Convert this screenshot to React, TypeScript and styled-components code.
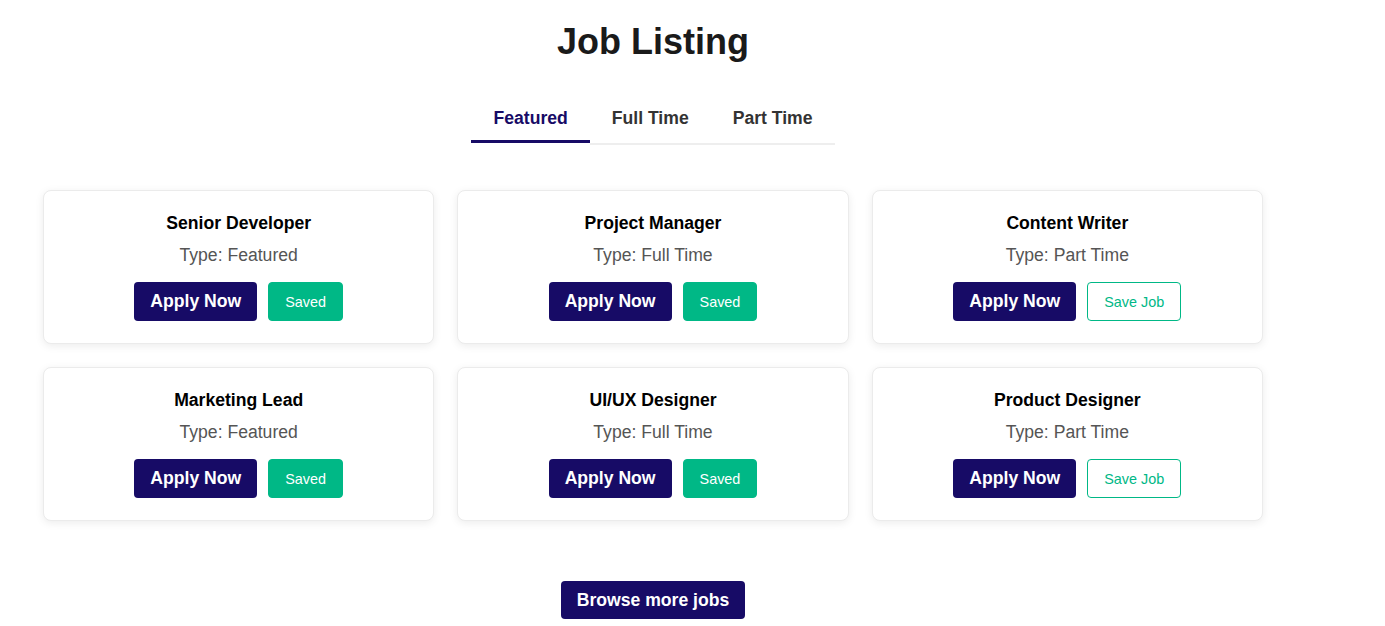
import React, { useState } from "react";
import styled, { createGlobalStyle } from "styled-components";

const GlobalStyle = createGlobalStyle`
  html, body { margin: 0; padding: 0; background: #ffffff; }
  body { font-family: "Liberation Sans", Arial, sans-serif; }
  * { box-sizing: border-box; }
`;

const INDIGO = "#170b66";
const GREEN = "#00b886";

const Page = styled.div`
  width: 1306px;
  padding: 20px 43px 0;
  display: flex;
  flex-direction: column;
  align-items: center;
`;

const Title = styled.h1`
  margin: 0;
  font-size: 36px;
  line-height: 44px;
  font-weight: 700;
  color: #1a1a1a;
`;

const TabList = styled.div`
  display: flex;
  align-items: flex-start;
  margin-top: 32px;
`;

const Tab = styled.button<{ $active?: boolean }>`
  font-family: inherit;
  background: none;
  border: none;
  cursor: pointer;
  font-size: 17.6px;
  font-weight: 700;
  line-height: 22px;
  padding: 11px 22px ${(p) => (p.$active ? "11px" : "14px")};
  color: ${(p) => (p.$active ? INDIGO : "#333333")};
  border-bottom: ${(p) => (p.$active ? `3px solid ${INDIGO}` : "2px solid #eeeeee")};
`;

const Grid = styled.div`
  align-self: stretch;
  display: grid;
  grid-template-columns: repeat(3, 1fr);
  gap: 23px;
  margin-top: 45px;
`;

const Card = styled.div`
  background: #fff;
  border: 1px solid #ebebeb;
  border-radius: 8px;
  box-shadow: 0 2px 8px rgba(0, 0, 0, 0.08);
  padding: 21px 20px 22px;
  display: flex;
  flex-direction: column;
  align-items: center;
`;

const JobTitle = styled.h3`
  margin: 0;
  font-size: 17.6px;
  line-height: 22px;
  font-weight: 700;
  color: #000;
`;

const JobType = styled.p`
  margin: 10px 0 0;
  font-size: 17.6px;
  line-height: 22px;
  color: #555555;
`;

const Actions = styled.div`
  display: flex;
  gap: 11px;
  margin-top: 16px;
`;

const ApplyButton = styled.button`
  font-family: inherit;
  background: ${INDIGO};
  color: #fff;
  border: none;
  border-radius: 4px;
  font-size: 17.6px;
  font-weight: 700;
  line-height: 23px;
  padding: 8px 16px;
  cursor: pointer;
`;

const SaveButton = styled.button<{ $saved?: boolean }>`
  font-family: inherit;
  background: ${(p) => (p.$saved ? GREEN : "#fff")};
  color: ${(p) => (p.$saved ? "#fff" : GREEN)};
  border: 1px solid ${GREEN};
  border-radius: 4px;
  font-size: 14.4px;
  line-height: 18px;
  padding: 0 16px;
  cursor: pointer;
`;

const BrowseButton = styled.button`
  font-family: inherit;
  margin-top: 60px;
  background: ${INDIGO};
  color: #fff;
  border: none;
  border-radius: 4px;
  font-size: 17.6px;
  font-weight: 700;
  line-height: 22px;
  padding: 8px 16px;
  cursor: pointer;
`;

type Job = { title: string; type: string; saved: boolean };

const jobs: Job[] = [
  { title: "Senior Developer", type: "Featured", saved: true },
  { title: "Project Manager", type: "Full Time", saved: true },
  { title: "Content Writer", type: "Part Time", saved: false },
  { title: "Marketing Lead", type: "Featured", saved: true },
  { title: "UI/UX Designer", type: "Full Time", saved: true },
  { title: "Product Designer", type: "Part Time", saved: false },
];

export default function App() {
  const [tab, setTab] = useState("Featured");
  return (
    <>
      <GlobalStyle />
      <Page>
        <Title>Job Listing</Title>
        <TabList>
          {["Featured", "Full Time", "Part Time"].map((t) => (
            <Tab key={t} $active={t === tab} onClick={() => setTab(t)}>
              {t}
            </Tab>
          ))}
        </TabList>
        <Grid>
          {jobs.map((j) => (
            <Card key={j.title}>
              <JobTitle>{j.title}</JobTitle>
              <JobType>Type: {j.type}</JobType>
              <Actions>
                <ApplyButton>Apply Now</ApplyButton>
                <SaveButton $saved={j.saved}>{j.saved ? "Saved" : "Save Job"}</SaveButton>
              </Actions>
            </Card>
          ))}
        </Grid>
        <BrowseButton>Browse more jobs</BrowseButton>
      </Page>
    </>
  );
}
